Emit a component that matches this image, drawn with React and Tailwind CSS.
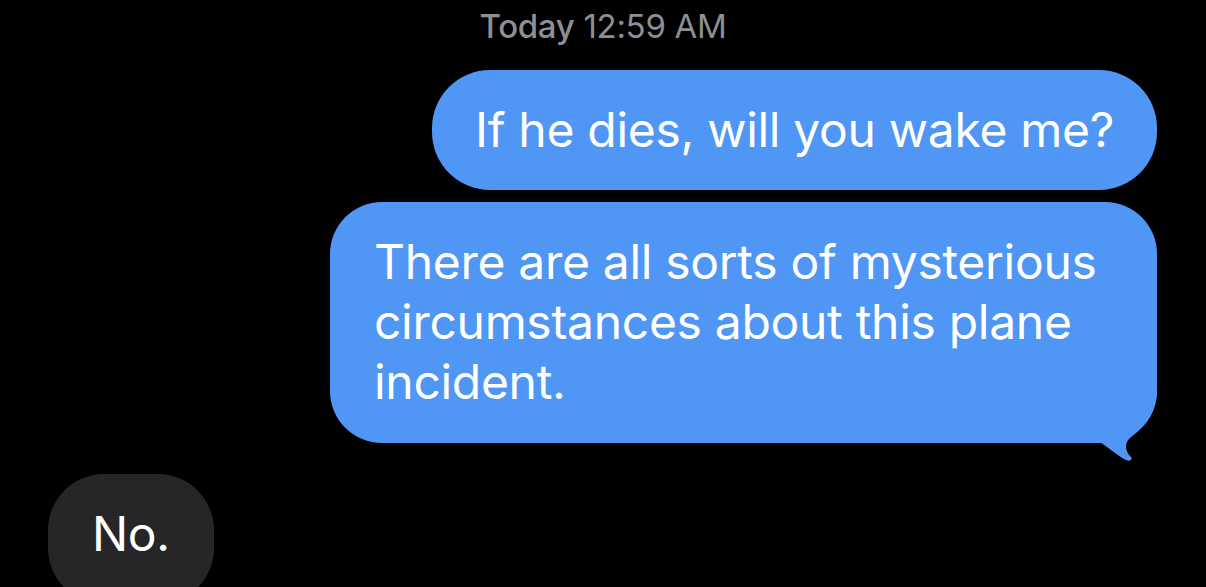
export default function App() {
  return (
    <div
      className="flex h-[587px] w-full flex-col overflow-hidden bg-black"
      style={{ fontFamily: 'Inter, "Noto Sans", sans-serif' }}
    >
      {/* timestamp */}
      <div className="pt-[5px] text-center text-[33px] leading-[42px] tracking-[-0.3px] text-[#8e8e93]">
        <span className="font-medium">Today</span> 12:59 AM
      </div>

      {/* outgoing */}
      <div className="mr-[49px] mt-[23px] flex flex-col items-end gap-[12px]">
        <div className="rounded-[58px] bg-[#5096f4] px-[43px] py-[30px] text-[48px] leading-[60px] tracking-[-0.3px] text-white">
          If he dies, will you wake me?
        </div>
        <div className="relative w-[827px] rounded-[52px] bg-[#5096f4] px-[44px] pb-[31px] pt-[30px] text-[48px] leading-[60px] tracking-[-0.3px] text-white">
          There are all sorts of mysterious
          <br />
          circumstances about this plane
          <br />
          incident.
          <svg
            className="absolute bottom-[-19px] right-0"
            width="71"
            height="82"
            viewBox="0 0 71 82"
          >
            <path
              d="M71 0 L71 10 C71 35 55 49 43 59 C38 64 40 73 45 77 C47 79 44 82 40 80 C30 75 20 65 10 60 L0 60 L0 0 Z"
              fill="#5096f4"
            />
          </svg>
        </div>
      </div>

      {/* incoming */}
      <div className="ml-[48px] mt-[31px] flex">
        <div className="rounded-[56px] bg-[#262628] px-[44px] pb-[40px] pt-[30px] text-[48px] leading-[60px] tracking-[-0.3px] text-white">
          No.
        </div>
      </div>
    </div>
  )
}
